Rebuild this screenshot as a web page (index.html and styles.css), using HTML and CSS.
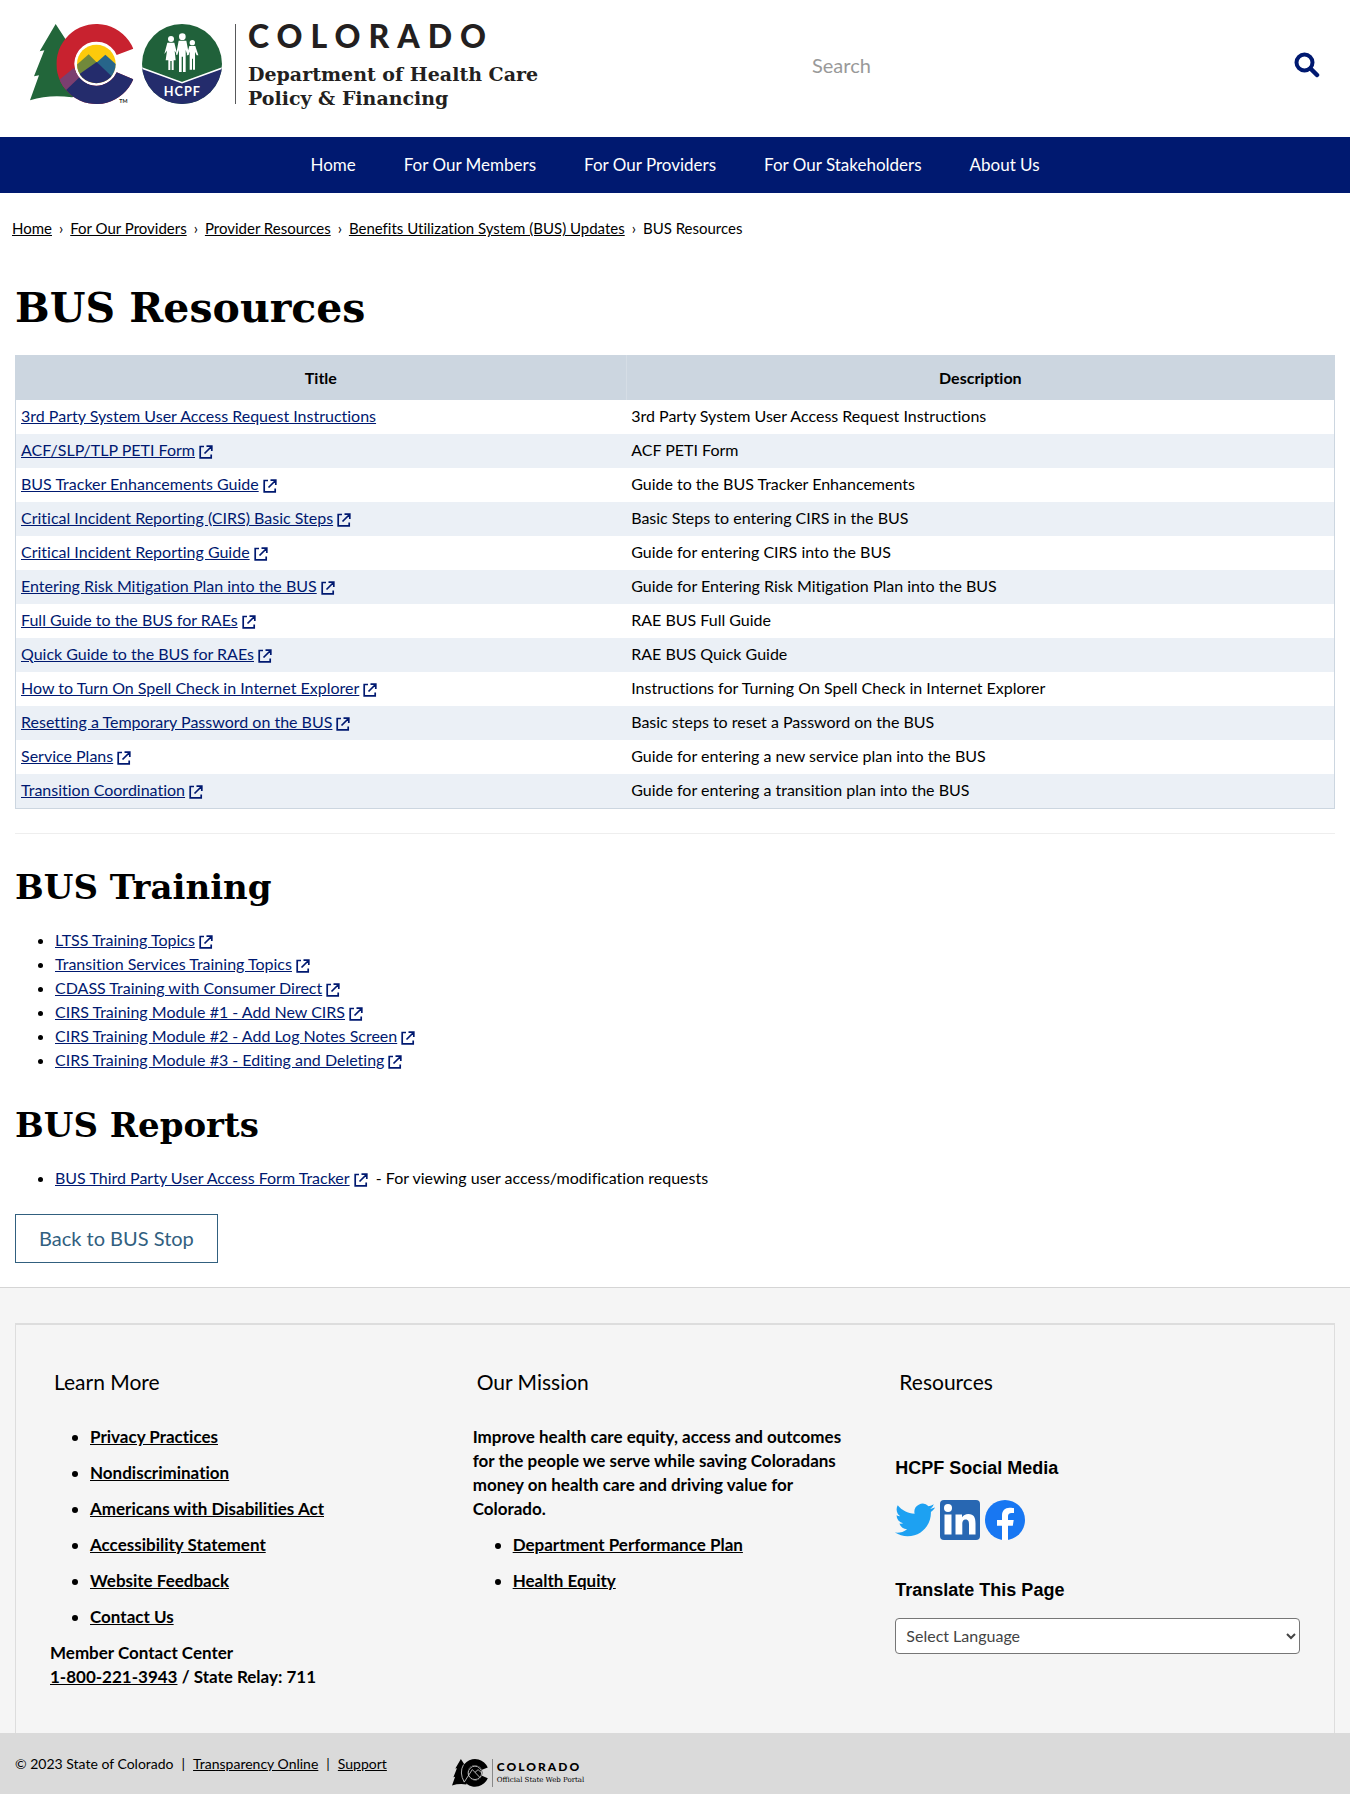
FILE: index.html
```html
<!DOCTYPE html>
<html lang="en">
<head>
<meta charset="utf-8">
<meta name="viewport" content="width=device-width, initial-scale=1">
<title>BUS Resources | Colorado Department of Health Care Policy &amp; Financing</title>
<link rel="stylesheet" href="styles.css">
</head>
<body>
<svg width="0" height="0" class="sprite" aria-hidden="true">
  <symbol id="ext" viewBox="0 0 14 14">
    <path d="M5 1.500H1.200V12.800H12.200V9.500M7.500 1.200H12.800V6M12.500 1.500L5.500 8.500" fill="none" stroke="currentColor" stroke-width="1.700"/>
  </symbol>
</svg>

<header class="header">
  <a class="brand" href="#">
    <svg class="brand-mark" viewBox="90 72 579 246" role="img" aria-label="Colorado HCPF">
      <defs>
        <clipPath id="c-shape"><path d="M400 146A120 120 0 1 0 400 238L350 217A66 66 0 1 1 350 165Z"/></clipPath>
        <clipPath id="c-inner"><circle cx="289" cy="192" r="58"/></clipPath>
        <clipPath id="seal"><circle cx="546" cy="192" r="120"/></clipPath>
      </defs>
      <path fill="#22663a" d="M167 72L202 126L192 150L215 185L230 290L215 292Q150 282 90 301L117 226L102 229L133 151L119 154Z"/>
      <g clip-path="url(#c-shape)">
        <rect x="160" y="70" width="250" height="250" fill="#c8222f"/>
        <path fill="#242c6c" d="M190 275L265 205H410V320H190Z"/>
        <path fill="#7b3f70" d="M165 250L222 203L240 230L196 272Z"/>
        <path fill="#24506a" d="M196 270Q208 288 232 298L205 320L180 290Z"/>
      </g>
      <circle cx="288" cy="192" r="64" fill="#fff"/>
      <g clip-path="url(#c-inner)">
        <rect x="225" y="130" width="130" height="130" fill="#fdca0b"/>
        <path fill="#71893b" d="M220 203L266 163L310 207L240 240Z"/>
        <path fill="#27658a" d="M289 188L316 164L352 196V235H320Z"/>
        <path fill="#242c6c" d="M230 228L290 186L338 232L350 260H230Z"/>
      </g>
      <g clip-path="url(#seal)">
        <rect x="420" y="70" width="250" height="250" fill="#20613a"/>
        <path fill="#242c6c" d="M420 202L546 248L672 202V320H420Z"/>
        <path d="M420 202L546 248L672 202" fill="none" stroke="#fff" stroke-width="5"/>
      </g>
      <g fill="#fff">
        <circle cx="513" cy="117" r="9"/><circle cx="547" cy="110" r="10"/><circle cx="577" cy="128" r="8"/>
        <path d="M502 128H523L532 164L524 152L527 181H521V210H515V183H511V210H505V181H497L501 152L493 162Z"/>
        <path d="M536 122H559L567 164H562L557 150V216H549V170H545V216H537V150L532 164H528Z"/>
        <path d="M568 138H586L595 166H590L585 155V209H579V176H576V209H569V155L564 166H560Z"/>
      </g>
      <text class="seal-text" x="547" y="289" text-anchor="middle">HCPF</text>
      <text class="tm-text" x="358" y="309">TM</text>
    </svg>
    <span class="brand-words">
      <span class="brand-state">COLORADO</span>
      <span class="brand-dept">Department of Health Care</span>
      <span class="brand-dept">Policy &amp; Financing</span>
    </span>
  </a>
  <form class="search" role="search">
    <input class="search-input" type="search" placeholder="Search" aria-label="Search">
    <button class="search-button" type="button" aria-label="Search">
      <svg viewBox="0 0 26 26" width="26" height="26"><circle cx="10.500" cy="10.500" r="8" fill="none" stroke="#001970" stroke-width="4"/><path d="M16.500 16.500L23 23" stroke="#001970" stroke-width="4.500" stroke-linecap="round"/></svg>
    </button>
  </form>
</header>

<nav class="nav" aria-label="Main">
  <a href="#">Home</a>
  <a href="#">For Our Members</a>
  <a href="#">For Our Providers</a>
  <a href="#">For Our Stakeholders</a>
  <a href="#">About Us</a>
</nav>

<nav class="crumbs" aria-label="Breadcrumb">
  <a href="#">Home</a><span>›</span><a href="#">For Our Providers</a><span>›</span><a href="#">Provider Resources</a><span>›</span><a href="#">Benefits Utilization System (BUS) Updates</a><span>›</span>BUS Resources
</nav>

<main class="main">
  <h1>BUS Resources</h1>
  <table class="table">
    <thead><tr><th class="col-title" scope="col">Title</th><th scope="col">Description</th></tr></thead>
    <tbody>
      <tr><td><a href="#">3rd Party System User Access Request Instructions</a></td><td>3rd Party System User Access Request Instructions</td></tr>
      <tr><td><a href="#">ACF/SLP/TLP PETI Form</a><svg class="ext"><use href="#ext"/></svg></td><td>ACF PETI Form</td></tr>
      <tr><td><a href="#">BUS Tracker Enhancements Guide</a><svg class="ext"><use href="#ext"/></svg></td><td>Guide to the BUS Tracker Enhancements</td></tr>
      <tr><td><a href="#">Critical Incident Reporting (CIRS) Basic Steps</a><svg class="ext"><use href="#ext"/></svg></td><td>Basic Steps to entering CIRS in the BUS</td></tr>
      <tr><td><a href="#">Critical Incident Reporting Guide</a><svg class="ext"><use href="#ext"/></svg></td><td>Guide for entering CIRS into the BUS</td></tr>
      <tr><td><a href="#">Entering Risk Mitigation Plan into the BUS</a><svg class="ext"><use href="#ext"/></svg></td><td>Guide for Entering Risk Mitigation Plan into the BUS</td></tr>
      <tr><td><a href="#">Full Guide to the BUS for RAEs</a><svg class="ext"><use href="#ext"/></svg></td><td>RAE BUS Full Guide</td></tr>
      <tr><td><a href="#">Quick Guide to the BUS for RAEs</a><svg class="ext"><use href="#ext"/></svg></td><td>RAE BUS Quick Guide</td></tr>
      <tr><td><a href="#">How to Turn On Spell Check in Internet Explorer</a><svg class="ext"><use href="#ext"/></svg></td><td>Instructions for Turning On Spell Check in Internet Explorer</td></tr>
      <tr><td><a href="#">Resetting a Temporary Password on the BUS</a><svg class="ext"><use href="#ext"/></svg></td><td>Basic steps to reset a Password on the BUS</td></tr>
      <tr><td><a href="#">Service Plans</a><svg class="ext"><use href="#ext"/></svg></td><td>Guide for entering a new service plan into the BUS</td></tr>
      <tr><td><a href="#">Transition Coordination</a><svg class="ext"><use href="#ext"/></svg></td><td>Guide for entering a transition plan into the BUS</td></tr>
    </tbody>
  </table>
  <hr class="rule">

  <h2>BUS Training</h2>
  <ul class="links">
    <li><a href="#">LTSS Training Topics</a><svg class="ext"><use href="#ext"/></svg></li>
    <li><a href="#">Transition Services Training Topics</a><svg class="ext"><use href="#ext"/></svg></li>
    <li><a href="#">CDASS Training with Consumer Direct</a><svg class="ext"><use href="#ext"/></svg></li>
    <li><a href="#">CIRS Training Module #1 - Add New CIRS</a><svg class="ext"><use href="#ext"/></svg></li>
    <li><a href="#">CIRS Training Module #2 - Add Log Notes Screen</a><svg class="ext"><use href="#ext"/></svg></li>
    <li><a href="#">CIRS Training Module #3 - Editing and Deleting</a><svg class="ext"><use href="#ext"/></svg></li>
  </ul>

  <h2>BUS Reports</h2>
  <ul class="links">
    <li><a href="#">BUS Third Party User Access Form Tracker</a><svg class="ext"><use href="#ext"/></svg>&nbsp; - For viewing user access/modification requests</li>
  </ul>
  <a class="back" href="#">Back to BUS Stop</a>
</main>

<footer>
  <div class="footer">
    <div class="footer-box">
      <section>
        <h3>Learn More</h3>
        <ul class="footer-list">
          <li><a href="#">Privacy Practices</a></li>
          <li><a href="#">Nondiscrimination</a></li>
          <li><a href="#">Americans with Disabilities Act</a></li>
          <li><a href="#">Accessibility Statement</a></li>
          <li><a href="#">Website Feedback</a></li>
          <li><a href="#">Contact Us</a></li>
        </ul>
        <p>Member Contact Center<br><a href="#">1-800-221-3943</a> / State Relay: 711</p>
      </section>
      <section>
        <h3>Our Mission</h3>
        <p class="mission">Improve health care equity, access and outcomes for the people we serve while saving Coloradans money on health care and driving value for Colorado.</p>
        <ul class="footer-list">
          <li><a href="#">Department Performance Plan</a></li>
          <li><a href="#">Health Equity</a></li>
        </ul>
      </section>
      <section>
        <h3>Resources</h3>
        <h4 class="social-title">HCPF Social Media</h4>
        <div class="social">
          <a href="#" aria-label="Twitter"><svg viewBox="0 0 24 24"><path fill="#1da1f2" d="M23.953 4.570a10 10 0 0 1-2.825.775 4.958 4.958 0 0 0 2.163-2.723c-.951.555-2.005.959-3.127 1.184a4.920 4.920 0 0 0-8.384 4.482C7.690 8.095 4.067 6.130 1.640 3.162a4.822 4.822 0 0 0-.666 2.475c0 1.710.870 3.213 2.188 4.096a4.904 4.904 0 0 1-2.228-.616v.060a4.923 4.923 0 0 0 3.946 4.827 4.996 4.996 0 0 1-2.212.085 4.936 4.936 0 0 0 4.604 3.417 9.867 9.867 0 0 1-6.102 2.105c-.390 0-.779-.023-1.170-.067a13.995 13.995 0 0 0 7.557 2.209c9.053 0 13.998-7.496 13.998-13.985 0-.210 0-.420-.015-.630A9.935 9.935 0 0 0 24 4.590z"/></svg></a>
          <a href="#" aria-label="LinkedIn"><svg viewBox="0 0 40 40"><rect width="40" height="40" rx="4" fill="#2867b2"/><circle cx="8" cy="8" r="4" fill="#fff"/><path fill="#fff" d="M4.500 14.500H11.500V34.500H4.500ZM15.500 14.500H22V17.300C23.200 15.300 25.600 14 28.300 14C34 14 35.500 17.800 35.500 23.400V34.500H29V24.500C29 22 28.500 19.600 25.700 19.600C22.900 19.600 22.300 21.900 22.300 24.400V34.500H15.500Z"/></svg></a>
          <a href="#" aria-label="Facebook"><svg viewBox="0 0 40 40"><circle cx="20" cy="20" r="20" fill="#1877f2"/><path fill="#fff" d="M17 40V25.800H12V20H17V15.600C17 10.600 20 7.800 24.500 7.800C26.700 7.800 29 8.200 29 8.200V13.100H26.500C24 13.100 23 14.600 23 16.300V20H28.700L27.800 25.800H23V40Z"/></svg></a>
        </div>
        <h4 class="translate-title"><label for="language">Translate This Page</label></h4>
        <select class="language" id="language"><option>Select Language</option></select>
      </section>
    </div>
  </div>
  <div class="bottom">
    <p class="legal">© 2023 State of Colorado<span>|</span><a href="#">Transparency Online</a><span>|</span><a href="#">Support</a></p>
    <a class="portal" href="#">
      <svg viewBox="90 72 312 242" width="36" height="28" role="img" aria-label="Colorado">
        <path fill="#000" d="M167 72L202 126L215 292Q150 282 90 301L117 226L102 229L133 151L119 154Z"/>
        <path d="M400 146A120 120 0 1 0 400 238L350 217A66 66 0 1 1 350 165Z"/>
        <circle cx="288" cy="192" r="66"/>
        <circle cx="289" cy="192" r="58" fill="none" stroke="#dadada" stroke-width="7"/>
        <path d="M196 272L266 163L332 232M289 188L316 164L352 196M190 120Q150 190 196 272" fill="none" stroke="#dadada" stroke-width="7"/>
      </svg>
      <span class="portal-words"><span class="portal-state">COLORADO</span><span class="portal-sub">Official State Web Portal</span></span>
    </a>
  </div>
</footer>
</body>
</html>
```

FILE: styles.css
```css
* { box-sizing: border-box; }

body {
  margin: 0;
  background: #fff;
  color: #000;
  font: 16px/24px Lato, "Liberation Sans", sans-serif;
  font-variant-ligatures: none;
}

a { color: inherit; }
h1, h2, h3, h4, p, ul { margin: 0; padding: 0; }
.sprite { display: block; }

/* Header */
.header {
  display: flex;
  justify-content: space-between;
  min-height: 137px;
  padding: 24px 30px 0;
}
.brand { display: flex; text-decoration: none; color: #231f20; }
.brand-mark { width: 193px; height: 82px; }
.seal-text { font: bold 38px Lato, sans-serif; fill: #fff; letter-spacing: 3px; }
.tm-text { font: bold 16px Lato, sans-serif; fill: #231f20; }
.brand-words {
  display: flex;
  flex-direction: column;
  align-self: flex-start;
  height: 80px;
  margin-left: 12px;
  padding-left: 12px;
  border-left: 1px solid #58595b;
}
.brand-state {
  margin-bottom: 14px;
  font-size: 32px;
  font-weight: 900;
  line-height: 24px;
  letter-spacing: 8px;
}
.brand-dept { font: bold 19px/24px "DejaVu Serif", serif; }

.search { display: flex; align-items: center; width: 520px; height: 82px; }
.search-input {
  flex: 1;
  min-width: 0;
  height: 40px;
  padding: 0 12px;
  border: 0;
  background: none;
  font: 20px/24px Lato, sans-serif;
}
.search-input::placeholder { color: #999; }
.search-button { display: flex; padding: 0; border: 0; background: none; }

/* Main navigation */
.nav {
  display: flex;
  justify-content: center;
  gap: 48px;
  padding: 16px 0;
  background: #001970;
}
.nav a { color: #fff; text-decoration: none; font-size: 17px; }

.crumbs { padding: 23px 12px 25px; font-size: 15px; }
.crumbs span { margin: 0 7px; }

/* Content */
.main { padding: 0 15px 24px; }
h1, h2 { font-family: "DejaVu Serif", serif; font-weight: bold; }
h1 { padding: 12px 0 16px; font-size: 41px; line-height: 62px; }
h2 { padding-top: 5px; font-size: 34px; line-height: 48px; }

.table {
  width: 100%;
  border: 1px solid #ccd6e0;
  border-collapse: collapse;
}
.table th { height: 44px; padding: 0 5px; background: #ccd6e0; }
.col-title { width: 46.3%; border-right: 1px solid #d5dde5; }
.table td { height: 34px; padding: 4px 5px 6px; }
.table tbody tr:nth-child(even) { background: #ebf0f6; }
.table td a, .links a { color: #001970; }
.ext {
  width: 14px;
  height: 14px;
  margin-left: 4px;
  color: #001970;
  vertical-align: -3px;
}
.rule { margin: 24px 0; border: 0; border-top: 1px solid #eee; }

.links { margin: 17px 0 24px; padding-left: 40px; }
.back {
  display: inline-block;
  padding: 11px 23px 12px;
  border: 1px solid #31607f;
  color: #31607f;
  font-size: 20px;
  text-decoration: none;
}

/* Footer */
.footer { padding: 35px 15px 0; border-top: 1px solid #d5d5d5; background: #f5f5f5; }
.footer-box {
  display: grid;
  grid-template-columns: repeat(3, 1fr);
  gap: 18px;
  padding: 45px 34px 44px;
  border: 2px solid #ddd;
  border-width: 2px 1px 0;
  font-size: 17px;
  font-weight: bold;
}
h3 { padding: 0 4px 31px; font-size: 21px; font-weight: normal; line-height: 24px; }
.footer-list { padding-left: 40px; }
.footer-list li { margin-bottom: 12px; }
.mission { padding-right: 24px; }
p + .footer-list { margin-top: 12px; }
h4 { font: bold 18px/24px "Liberation Sans", sans-serif; }
.social { display: flex; gap: 5px; }
.social a, .social svg { display: block; width: 40px; height: 40px; }
.social-title { padding: 31px 0 20px; }
.translate-title { margin: 38px 0 16px; }
.language {
  display: block;
  width: 100%;
  height: 36px;
  padding: 0 6px;
  border: 1px solid #767676;
  border-radius: 4px;
  background: #fff;
  color: #444;
  font: 16px/24px Lato, sans-serif;
}

.bottom {
  display: flex;
  gap: 65px;
  min-height: 61px;
  padding: 19px 15px 0;
  background: #dadada;
}
.legal { font-size: 14px; }
.legal span { margin: 0 8px; }
.portal { display: flex; gap: 4px; padding-top: 7px; color: #000; text-decoration: none; }
.portal-words {
  display: flex;
  flex-direction: column;
  height: 28px;
  padding-left: 4px;
  border-left: 1px solid #888;
}
.portal-state { font-size: 12px; font-weight: 900; line-height: 15px; letter-spacing: 2px; }
.portal-sub { font: 7px/12px "DejaVu Serif", serif; }
```
